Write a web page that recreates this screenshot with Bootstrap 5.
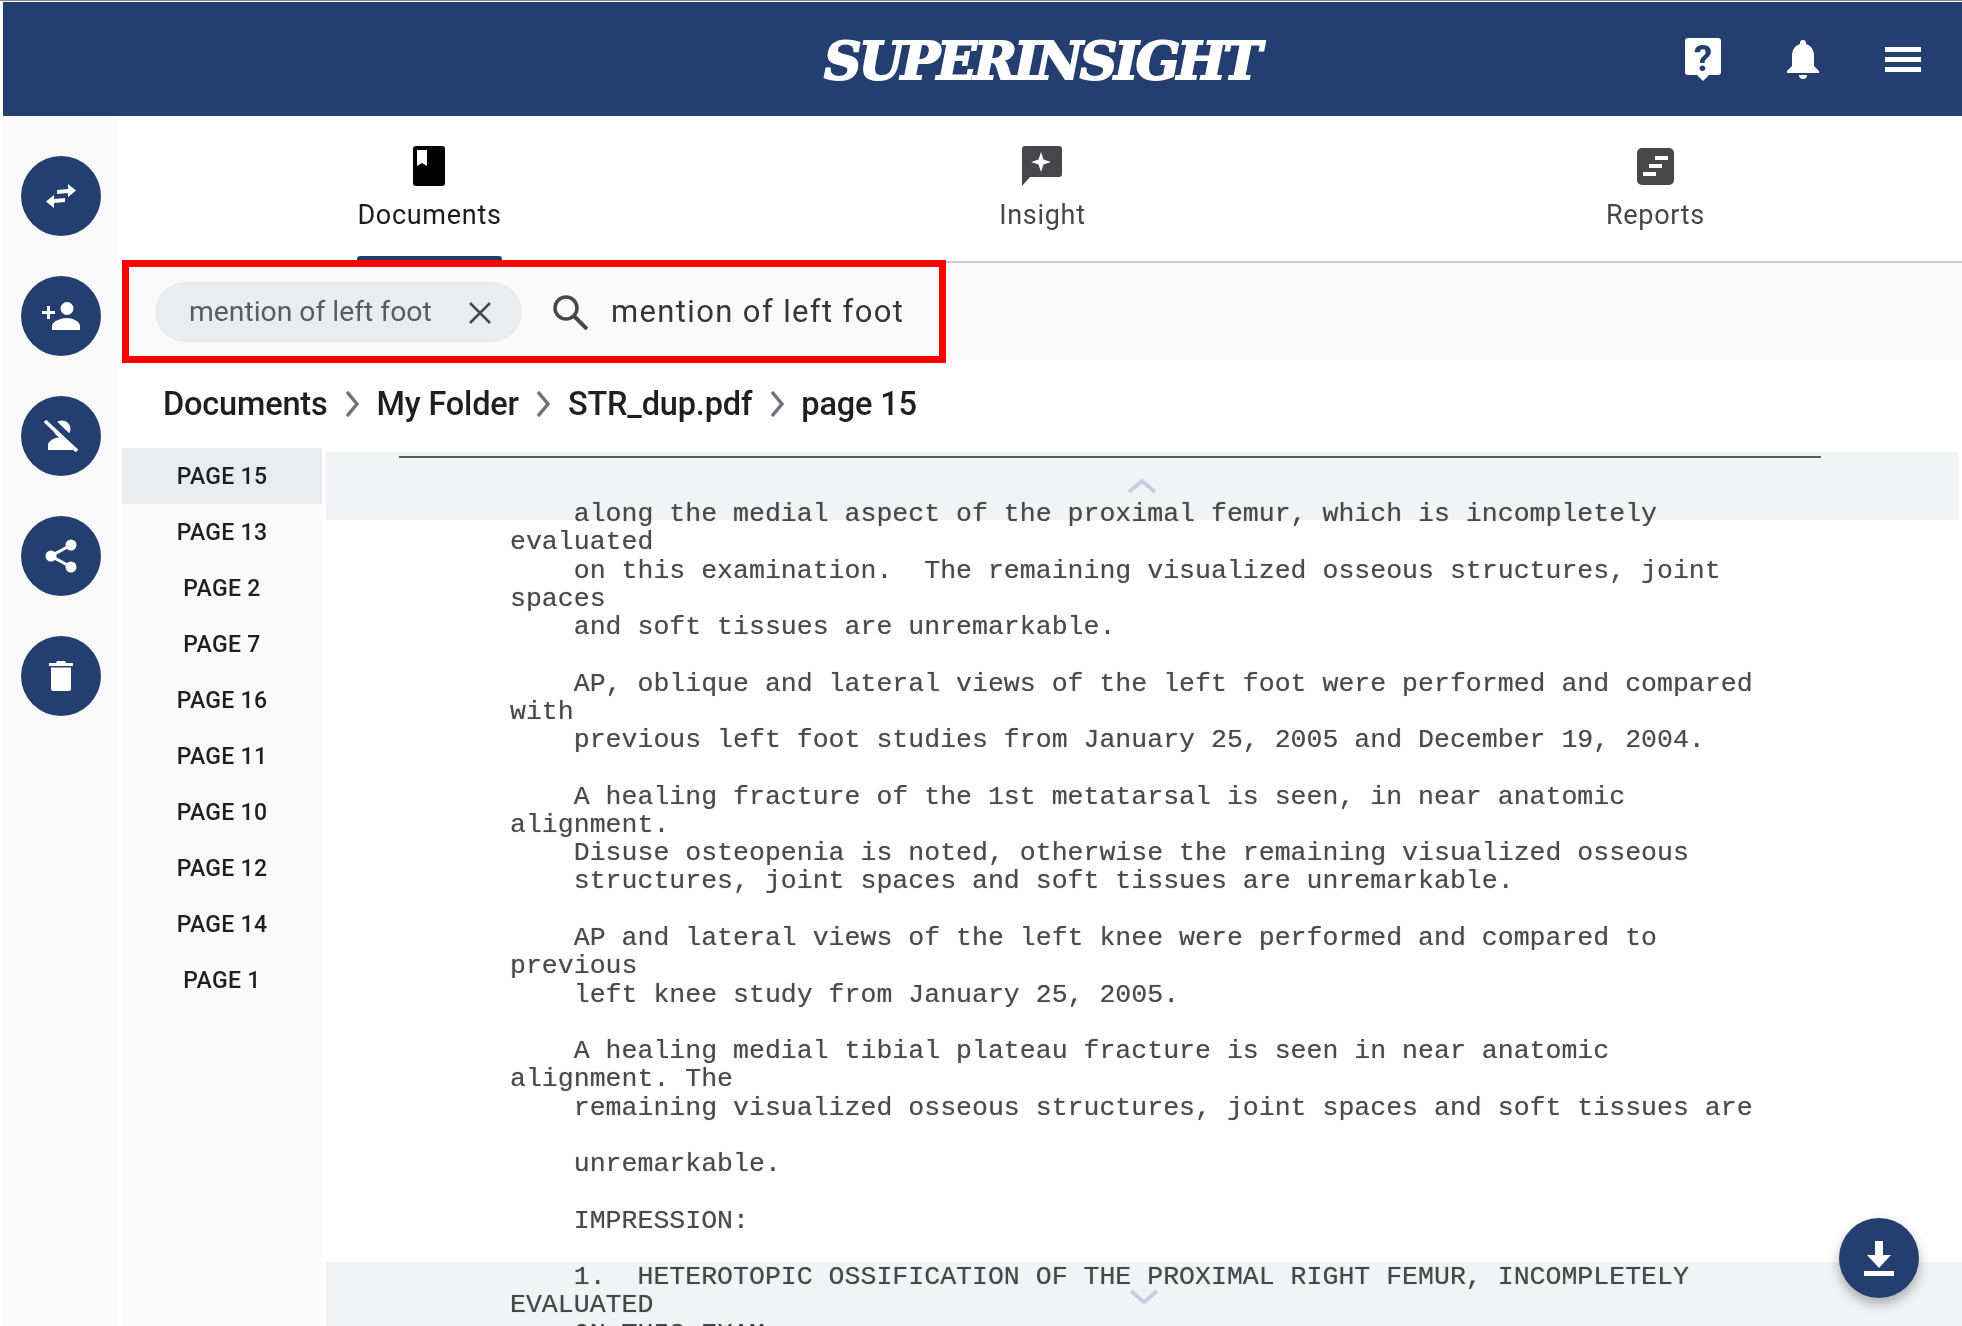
<!DOCTYPE html>
<html lang="en">

<head>
    <title>Superinsight</title>
    <meta charset="utf-8">
    <meta name="viewport" content="width=device-width, initial-scale=1">
    <link href="https://cdn.jsdelivr.net/npm/bootstrap@5.3.1/dist/css/bootstrap.min.css" rel="stylesheet">
    <script src="https://cdn.jsdelivr.net/npm/bootstrap@5.3.1/dist/js/bootstrap.bundle.min.js"></script>
    <style>
        html, body { height: 100%; overflow: hidden; }
        body { font-family: Roboto, "Liberation Sans", sans-serif; background: #fff; padding: 1px 0 0 3px; border-top: 1px solid #8a8a8a; }
        .app-head { height: 114px; background: #243f6f; padding-right: 41px; }
        .app-logo { font-family: "DejaVu Serif", serif; font-weight: 700; font-style: italic; font-size: 52px; color: #fff; -webkit-text-stroke: 2px #fff; letter-spacing: -3px; line-height: 1; }
        .logo-wrap { left: 118px; right: 0; top: 0; bottom: 0; padding-top: 4px; pointer-events: none; }
        .head-icons { gap: 66px; }
        .app-main { height: 1210px; }
        .side-rail { width: 115px; background: #fafafa; padding-top: 40px; gap: 40px; }
        .round-btn { width: 80px; height: 80px; background: #243f6f; border: 0; }
        .tab-strip { height: 147px; border-bottom: 2px solid #c6ccd4; margin-left: 5px; margin-right: 0; }
        .tab-item { color: #47474b; font-size: 27px; padding-top: 30px; line-height: 1; letter-spacing: .7px; }
        .tab-item.is-on { color: #1b1b1f; }
        .tab-label { margin-top: 16px; }
        .tab-item.is-on .tab-label { position: relative; padding-bottom: 31px; }
        .tab-bar { left: 0; right: 0; bottom: 0; height: 4px; background: #243f6f; border-radius: 3px 3px 0 0; }
        .search-row { height: 97px; background: #fafafa; }
        .search-box { margin-left: 4px; margin-top: -3px; width: 824px; height: 103px; border: 7px solid #ff0000; padding-left: 26px; flex: none; position: relative; }
        .search-chip { width: 367px; height: 60px; background: #ebecf0; border-radius: 30px; color: #5b5b60; font-size: 28.3px; padding: 2px 31px 0 34px; }
        .search-icon { margin-left: 30px; }
        .search-text { color: #36363a; font-size: 31px; letter-spacing: 1.37px; margin-left: 23px; padding-top: 2px; }
        .crumbs { height: 88px; padding-left: 45px; font-size: 32.5px; font-weight: 500; color: #1f1f23; gap: 17.5px; letter-spacing: -.17px; }
        .doc-area { height: 878px; }
        .page-list { width: 200px; margin-left: 4px; background: #fafafa; flex: none; }
        .page-item { height: 56px; padding-top: 2px; font-size: 23px; font-weight: 500; color: #1f1f23; letter-spacing: .3px; }
        .page-item.is-on { background: #ebecf0; }
        .doc-view { margin-left: 4px; overflow: hidden; position: relative; }
        .scan-line { left: 73px; top: 8px; width: 1422px; height: 2px; background: #5e5e5e; }
        .scan-text { font-family: "Liberation Mono", monospace; font-size: 26.55px; line-height: 28.27px; color: #4a4a4a; margin: 0; padding: 52px 0 0 184px; overflow: hidden; white-space: pre; text-shadow: 0 0 1px rgba(60,60,60,.5); }
        .fade-top, .fade-bottom { left: 0; background: #f2f3f5; mix-blend-mode: multiply; }
        .fade-top { top: 4px; height: 68px; right: 4px; }
        .fade-bottom { bottom: 0; height: 64px; right: 0; padding-top: 6px; }
        .fab-btn { right: 43px; bottom: 28px; width: 80px; height: 80px; background: #243f6f; border: 0; box-shadow: 0 6px 12px rgba(0,0,0,.3); }
    </style>
</head>

<body>

    <!-- top bar -->
    <header class="app-head position-relative d-flex align-items-center justify-content-end">
        <div class="logo-wrap position-absolute d-flex align-items-center justify-content-center">
            <span class="app-logo">SUPERINSIGHT</span>
        </div>
        <div class="head-icons d-flex align-items-center">
            <svg width="36" height="43" viewBox="0 0 36 43"><path fill="#fff" d="M3 0h30a3 3 0 0 1 3 3v31a3 3 0 0 1-3 3h-9l-6 6-6-6H3a3 3 0 0 1-3-3V3a3 3 0 0 1 3-3z"/><text x="18" y="33" text-anchor="middle" font-family="Roboto" font-weight="700" font-size="37" fill="#243f6f">?</text></svg>
            <svg width="32" height="39" viewBox="0 0 32 39"><path fill="#fff" d="M16 0a3 3 0 0 1 3 3v1c5 1.500 8 6 8 12v10l5 5v2H0v-2l5-5V16c0-6 3-10.500 8-12V3a3 3 0 0 1 3-3zM12 35h8a4 4 0 0 1-8 0z"/></svg>
            <svg width="36" height="25" viewBox="0 0 36 25"><path fill="#fff" d="M0 0h36v5H0zM0 10h36v5H0zM0 20h36v5H0z"/></svg>
        </div>
    </header>

    <div class="app-main d-flex">
        <!-- left action buttons -->
        <aside class="side-rail d-flex flex-column align-items-center flex-shrink-0">
            <button class="round-btn rounded-circle d-flex align-items-center justify-content-center p-0">
                <svg width="30" height="24" viewBox="0 0 30 24"><path fill="#fff" d="M22 0l8 6.500-8 6.500V9l-11 1V6l11-1zM8 11v4l11-1v4L8 19v5l-8-6.500z"/></svg>
            </button>
            <button class="round-btn rounded-circle d-flex align-items-center justify-content-center p-0">
                <svg width="38" height="28" viewBox="0 0 38 28"><circle cx="25" cy="6.500" r="6.500" fill="#fff"/><path fill="#fff" d="M10 28v-4c0-5 10-8 15-8s13 3 13 8v4zM0 9h5V4h3v5h5v3H8v5H5v-5H0z"/></svg>
            </button>
            <button class="round-btn rounded-circle d-flex align-items-center justify-content-center p-0">
                <svg width="34" height="32" viewBox="0 0 34 32"><circle cx="18" cy="9" r="8.500" fill="#fff"/><path fill="#fff" d="M4 30v-5c0-4 7-8 13-8s12 4 12 8v5z"/><path stroke="#243f6f" stroke-width="7" d="M4 -2l33 31"/><path stroke="#fff" stroke-width="3.500" d="M1 1l32 30"/></svg>
            </button>
            <button class="round-btn rounded-circle d-flex align-items-center justify-content-center p-0">
                <svg width="32" height="34" viewBox="0 0 32 34"><g fill="#fff"><circle cx="26" cy="6" r="5.500"/><circle cx="26" cy="28" r="5.500"/><circle cx="6" cy="17" r="5.500"/></g><path stroke="#fff" stroke-width="3" fill="none" d="M26 6L6 17l20 11"/></svg>
            </button>
            <button class="round-btn rounded-circle d-flex align-items-center justify-content-center p-0">
                <svg width="24" height="30" viewBox="0 0 24 30"><path fill="#fff" d="M8 0h8l1 2h7v3H0V2h7zM2 6.500h20V28a2 2 0 0 1-2 2H4a2 2 0 0 1-2-2z"/></svg>
            </button>
        </aside>

        <main class="flex-grow-1 d-flex flex-column" style="min-width:0">
            <!-- tabs -->
            <nav class="tab-strip row g-0">
                <div class="col-4 tab-item is-on d-flex flex-column align-items-center">
                    <svg width="32" height="40" viewBox="0 0 32 40"><path fill="#000" fill-rule="evenodd" d="M3 0h26a3 3 0 0 1 3 3v34a3 3 0 0 1-3 3H3a3 3 0 0 1-3-3V3a3 3 0 0 1 3-3zm1 4v16l5-3 5 3V4z"/></svg>
                    <div class="tab-label">Documents<span class="tab-bar position-absolute"></span></div>
                </div>
                <div class="col-4 tab-item d-flex flex-column align-items-center">
                    <svg width="40" height="40" viewBox="0 0 40 40"><path fill="#47474b" d="M3 0h34a3 3 0 0 1 3 3v25a3 3 0 0 1-3 3H8l-8 9V3a3 3 0 0 1 3-3z"/><path fill="#fff" d="M19 6l2.500 7.500L29 16l-7.500 2.500L19 26l-2.500-7.500L9 16l7.500-2.500z"/></svg>
                    <div class="tab-label">Insight</div>
                </div>
                <div class="col-4 tab-item d-flex flex-column align-items-center">
                    <svg width="37" height="40" viewBox="0 0 37 40"><rect y="2" width="37" height="37" rx="5" fill="#47474b"/><path fill="#fff" d="M18 10h13v4H18zM12 18h13v4H12zM6 26h13v4H6z"/></svg>
                    <div class="tab-label">Reports</div>
                </div>
            </nav>

            <!-- search -->
            <section class="search-row d-flex flex-shrink-0">
                <div class="search-box d-flex align-items-center">
                    <div class="search-chip d-flex align-items-center justify-content-between flex-shrink-0">
                        <span>mention of left foot</span>
                        <svg width="22" height="22" viewBox="0 0 22 22"><path stroke="#47474b" stroke-width="2.500" d="M1 1l20 20M21 1L1 21"/></svg>
                    </div>
                    <svg class="search-icon" width="36" height="36" viewBox="0 0 36 36"><circle cx="14" cy="14" r="11" fill="none" stroke="#47474b" stroke-width="3.500"/><path stroke="#47474b" stroke-width="4" d="M22 22l13 13"/></svg>
                    <span class="search-text">mention of left foot</span>
                </div>
            </section>

            <!-- breadcrumb -->
            <div class="crumbs d-flex align-items-center flex-shrink-0">
                <span>Documents</span>
                <svg width="14" height="26" viewBox="0 0 14 26"><path fill="none" stroke="#6b7280" stroke-width="3.500" d="M2 1l10 12L2 25"/></svg>
                <span>My Folder</span>
                <svg width="14" height="26" viewBox="0 0 14 26"><path fill="none" stroke="#6b7280" stroke-width="3.500" d="M2 1l10 12L2 25"/></svg>
                <span>STR_dup.pdf</span>
                <svg width="14" height="26" viewBox="0 0 14 26"><path fill="none" stroke="#6b7280" stroke-width="3.500" d="M2 1l10 12L2 25"/></svg>
                <span>page 15</span>
            </div>

            <!-- page list and scan -->
            <div class="doc-area d-flex">
                <div class="page-list">
                    <div class="page-item is-on d-flex align-items-center justify-content-center">PAGE 15</div>
                    <div class="page-item d-flex align-items-center justify-content-center">PAGE 13</div>
                    <div class="page-item d-flex align-items-center justify-content-center">PAGE 2</div>
                    <div class="page-item d-flex align-items-center justify-content-center">PAGE 7</div>
                    <div class="page-item d-flex align-items-center justify-content-center">PAGE 16</div>
                    <div class="page-item d-flex align-items-center justify-content-center">PAGE 11</div>
                    <div class="page-item d-flex align-items-center justify-content-center">PAGE 10</div>
                    <div class="page-item d-flex align-items-center justify-content-center">PAGE 12</div>
                    <div class="page-item d-flex align-items-center justify-content-center">PAGE 14</div>
                    <div class="page-item d-flex align-items-center justify-content-center">PAGE 1</div>
                </div>
                <div class="doc-view flex-grow-1">
                    <span class="scan-line position-absolute"></span>
<pre class="scan-text">    along the medial aspect of the proximal femur, which is incompletely
evaluated
    on this examination.  The remaining visualized osseous structures, joint
spaces
    and soft tissues are unremarkable.

    AP, oblique and lateral views of the left foot were performed and compared
with
    previous left foot studies from January 25, 2005 and December 19, 2004.

    A healing fracture of the 1st metatarsal is seen, in near anatomic
alignment.
    Disuse osteopenia is noted, otherwise the remaining visualized osseous
    structures, joint spaces and soft tissues are unremarkable.

    AP and lateral views of the left knee were performed and compared to
previous
    left knee study from January 25, 2005.

    A healing medial tibial plateau fracture is seen in near anatomic
alignment. The
    remaining visualized osseous structures, joint spaces and soft tissues are

    unremarkable.

    IMPRESSION:

    1.  HETEROTOPIC OSSIFICATION OF THE PROXIMAL RIGHT FEMUR, INCOMPLETELY
EVALUATED
    ON THIS EXAM</pre>
                    <div class="fade-top position-absolute d-flex align-items-center justify-content-center"><svg width="30" height="16" viewBox="0 0 30 16"><path fill="none" stroke="#c3cfdd" stroke-width="4" d="M2 14L15 3l13 11"/></svg></div>
                    <div class="fade-bottom position-absolute d-flex align-items-center justify-content-center"><svg width="30" height="16" viewBox="0 0 30 16"><path fill="none" stroke="#c3cfdd" stroke-width="4" d="M2 2l13 11L28 2"/></svg></div>
                    <button class="fab-btn position-absolute rounded-circle d-flex align-items-center justify-content-center p-0">
                        <svg width="30" height="35" viewBox="0 0 30 35"><path fill="#fff" d="M11 0h8v14h8L15 27 3 14h8zM0 30h30v5H0z"/></svg>
                    </button>
                </div>
            </div>
        </main>
    </div>

</body>

</html>
